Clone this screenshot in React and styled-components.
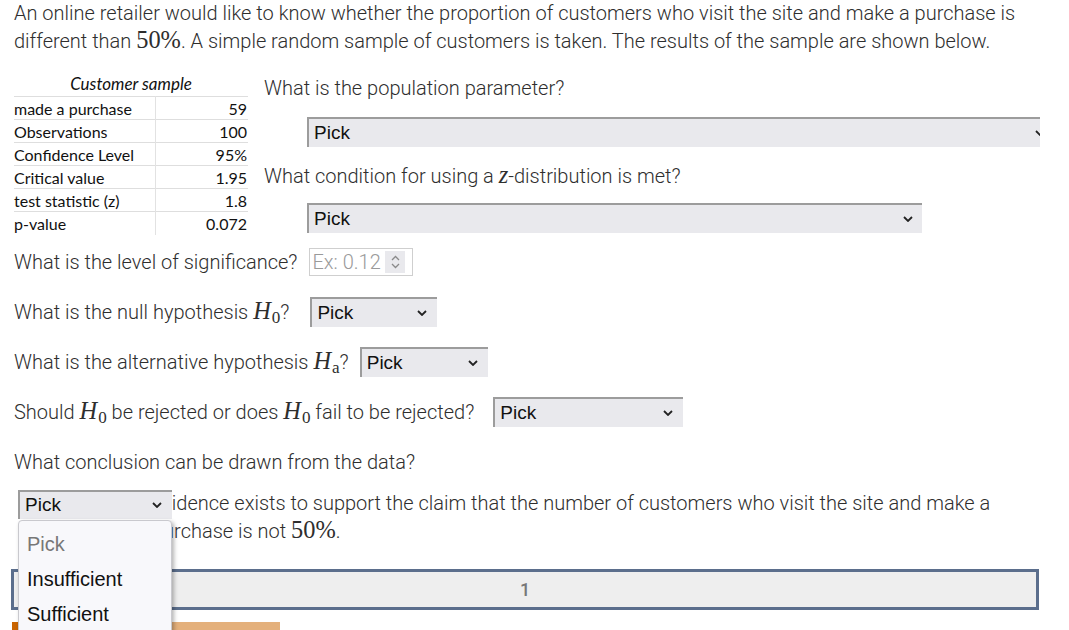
import React from "react";
import styled, { createGlobalStyle } from "styled-components";

const GlobalStyle = createGlobalStyle`
    html, body {
        margin: 0;
        padding: 0;
        background: #ffffff;
    }
    body {
        font-family: Roboto, "Liberation Sans", sans-serif;
        font-size: 20px;
        font-weight: 300;
        color: #2e2e2e;
        overflow: hidden;
    }
`;

const Page = styled.div`
    width: 1069px;
    height: 630px;
    padding: 0 14px;
    box-sizing: border-box;
    overflow: hidden;
`;

const Intro = styled.p`
    margin: -1px 0 0;
    line-height: 28px;
`;

const MathText = styled.span`
    font-family: "Liberation Serif", "DejaVu Serif", serif;
    font-size: 1.22em;
    font-weight: 400;
    line-height: 1;
    font-style: ${(p) => (p.italic ? "italic" : "normal")};
`;

const Sub = styled.span`
    font-style: normal;
    font-size: 0.7em;
    position: relative;
    top: 0.25em;
    margin-left: 1px;
`;

const TopSection = styled.div`
    display: flex;
    margin-top: 18px;
`;

const SampleBlock = styled.div`
    width: 234px;
    font-family: Lato, "Open Sans", sans-serif;
    font-size: 16px;
    font-weight: 400;
    color: #111111;
`;

const Caption = styled.div`
    height: 23px;
    line-height: 22px;
    text-align: center;
    font-style: italic;
    font-size: 17px;
`;

const Table = styled.table`
    width: 100%;
    border-collapse: collapse;
`;

const Cell = styled.td`
    height: 23px;
    padding: 0 1px 0 0;
    box-sizing: border-box;
    border-top: 1px solid #dedede;
    text-align: ${(p) => (p.num ? "right" : "left")};
    width: ${(p) => (p.num ? "auto" : "141px")};
    border-right: ${(p) => (p.num ? "none" : "1px solid #e2e2e2")};
`;

const RightColumn = styled.div`
    flex: 1;
    margin: 1px 0 0 16px;
`;

const Label = styled.div`
    line-height: 28px;
    white-space: nowrap;
`;

const SelectBox = styled.div`
    position: relative;
    width: ${(p) => p.width}px;
    height: ${(p) => p.height || 30}px;
    margin-left: ${(p) => p.indent || 0}px;
    margin-top: ${(p) => p.top || 0}px;
    margin-bottom: ${(p) => p.bottom || 0}px;
    flex-shrink: 0;
    box-sizing: border-box;
    background: #e9e9ed;
    border-top: 2px solid #9c9c9c;
    border-left: 2px solid #9c9c9c;
    padding-left: 5px;
    display: flex;
    align-items: center;
    font-family: "Liberation Sans", Arial, sans-serif;
    font-size: 19px;
    font-weight: 400;
    color: #111111;
    overflow: hidden;
`;

const Chevron = styled.svg`
    position: absolute;
    right: ${(p) => p.right}px;
    top: 50%;
    margin-top: -3px;
`;

const QuestionList = styled.div`
    margin-top: 12px;
`;

const Row = styled.div`
    display: flex;
    align-items: center;
    height: 30px;
    margin-bottom: 20px;
`;

const NumberInput = styled.div`
    width: 104px;
    height: 28px;
    margin-left: ${(p) => p.gap}px;
    box-sizing: border-box;
    border: 1px solid #cfcfcf;
    display: flex;
    align-items: center;
    justify-content: space-between;
    padding: 0 7px 0 2px;
    color: #9a9a9a;
`;

const Spinner = styled.div`
    width: 20px;
    height: 22px;
    background: #e9e9ed;
    display: flex;
    align-items: center;
    justify-content: center;
`;

const ConclusionRow = styled.div`
    display: flex;
    align-items: flex-start;
    margin-top: -8px;
`;

const SelectHolder = styled.div`
    position: relative;
    z-index: 2;
    margin: 1px -20px 0 4px;
`;

const ConclusionText = styled.div`
    width: 880px;
    line-height: 28px;
`;

const Dropdown = styled.ul`
    position: absolute;
    top: 30px;
    left: 0;
    width: 154px;
    height: 130px;
    margin: 0;
    padding: 6px 0 0;
    list-style: none;
    box-sizing: border-box;
    background: #f8f8fb;
    border: 1px solid #c9c9ce;
    border-radius: 4px;
    box-shadow: 2px 2px 4px rgba(0, 0, 0, 0.3);
    font-family: "Liberation Sans", Arial, sans-serif;
    font-size: 20px;
    font-weight: 400;
`;

const Option = styled.li`
    height: 35px;
    line-height: 35px;
    padding-left: 8px;
    color: ${(p) => (p.muted ? "#777777" : "#111111")};
`;

const ResultBox = styled.div`
    width: 1028px;
    height: 41px;
    margin: 24px 0 0 -3px;
    box-sizing: border-box;
    border: 3px solid #5b6e8c;
    background: #eeeeee;
    display: flex;
    align-items: center;
    justify-content: center;
    color: #777777;
    font-size: 18px;
    font-weight: 500;
`;

const ProgressBar = styled.div`
    width: 268px;
    height: 10px;
    margin: 12px 0 0 -2px;
    box-sizing: border-box;
    background: #e4b07b;
    border-left: 6px solid #c96400;
`;

const ChevronIcon = ({ right }) => (
    <Chevron right={right} width="10" height="6" viewBox="0 0 10 6">
        <path d="M1 1l4 4 4-4" fill="none" stroke="#222" strokeWidth="1.8" />
    </Chevron>
);

const Select = ({ width, chevron = 9, children, ...rest }) => (
    <SelectBox width={width} {...rest}>
        Pick
        <ChevronIcon right={chevron} />
        {children}
    </SelectBox>
);

const H0 = () => (
    <MathText italic>
        H<Sub>0</Sub>
    </MathText>
);

const sample = [
    ["made a purchase", "59"],
    ["Observations", "100"],
    ["Confidence Level", "95%"],
    ["Critical value", "1.95"],
    ["test statistic (z)", "1.8"],
    ["p-value", "0.072"],
];

const App = () => {
    return (
        <Page>
            <GlobalStyle />
            <Intro>
                An online retailer would like to know whether the proportion of
                customers who visit the site and make a purchase is different
                than <MathText>50%</MathText>. A simple random sample of
                customers is taken. The results of the sample are shown below.
            </Intro>

            <TopSection>
                <SampleBlock>
                    <Caption>Customer sample</Caption>
                    <Table>
                        <tbody>
                            {sample.map(([name, value]) => (
                                <tr key={name}>
                                    <Cell>{name}</Cell>
                                    <Cell num>{value}</Cell>
                                </tr>
                            ))}
                        </tbody>
                    </Table>
                </SampleBlock>
                <RightColumn>
                    <Label>What is the population parameter?</Label>
                    <Select width={733} chevron={-5} indent={43} top={15} bottom={15} />
                    <Label>
                        What condition for using a <MathText italic>z</MathText>
                        -distribution is met?
                    </Label>
                    <Select width={615} chevron={9} indent={43} top={13} />
                </RightColumn>
            </TopSection>

            <QuestionList>
                <Row>
                    <Label>What is the level of significance?</Label>
                    <NumberInput gap={12}>
                        Ex: 0.12
                        <Spinner>
                            <svg width="9" height="14" viewBox="0 0 9 14">
                                <path
                                    d="M1 5l3.5-3.5L8 5M1 9l3.5 3.5L8 9"
                                    fill="none"
                                    stroke="#8a8a8a"
                                    strokeWidth="1.3"
                                />
                            </svg>
                        </Spinner>
                    </NumberInput>
                </Row>
                <Row>
                    <Label>
                        What is the null hypothesis <H0 />?
                    </Label>
                    <Select width={127} indent={21} chevron={10} />
                </Row>
                <Row>
                    <Label>
                        What is the alternative hypothesis{" "}
                        <MathText italic>
                            H<Sub>a</Sub>
                        </MathText>
                        ?
                    </Label>
                    <Select width={128} indent={11} chevron={10} />
                </Row>
                <Row>
                    <Label>
                        Should <H0 /> be rejected or does <H0 /> fail to be
                        rejected?
                    </Label>
                    <Select width={190} indent={19} chevron={10} />
                </Row>
                <Row>
                    <Label>What conclusion can be drawn from the data?</Label>
                </Row>
            </QuestionList>

            <ConclusionRow>
                <SelectHolder>
                    <Select width={154} height={29} chevron={10} />
                    <Dropdown>
                        <Option muted>Pick</Option>
                        <Option>Insufficient</Option>
                        <Option>Sufficient</Option>
                    </Dropdown>
                </SelectHolder>
                <ConclusionText>
                    evidence exists to support the claim that the number of
                    customers who visit the site and make a purchase is not{" "}
                    <MathText>50%</MathText>.
                </ConclusionText>
            </ConclusionRow>

            <ResultBox>1</ResultBox>
            <ProgressBar />
        </Page>
    );
};

export default App;
